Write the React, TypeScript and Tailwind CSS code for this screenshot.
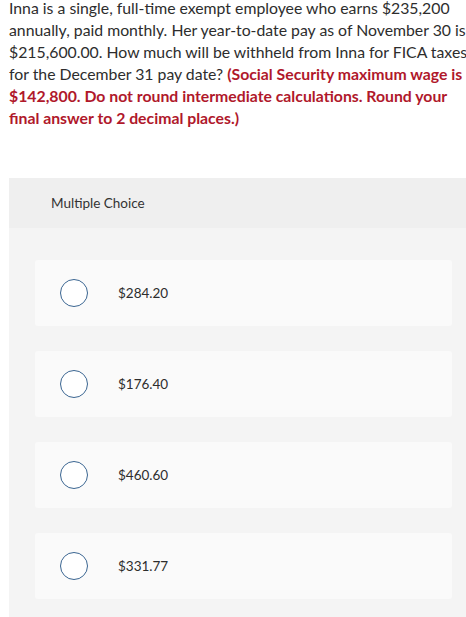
import React from 'react';

const choices = ['$284.20', '$176.40', '$460.60', '$331.77'];

const App: React.FC = () => {
  return (
    <div className="w-[466px] h-[617px] overflow-hidden bg-white" style={{ fontFamily: 'Lato, "Open Sans", sans-serif' }}>
      {/* Question */}
      <div className="pl-[9px] pt-0 w-[560px] text-[15.8px] leading-[22px] text-[#2d2d2d] -mt-[3px]">
        Inna is a single, full-time exempt employee who earns $235,200<br />
        annually, paid monthly. Her year-to-date pay as of November 30 is<br />
        $215,600.00. How much will be withheld from Inna for FICA taxes<br />
        for the December 31 pay date?{' '}
        <span className="font-bold text-[#b0182b]">
          (Social Security maximum wage is<br />
          $142,800. Do not round intermediate calculations. Round your<br />
          final answer to 2 decimal places.)
        </span>
      </div>

      {/* Multiple choice panel */}
      <div className="ml-[9px] mt-[49px] w-[470px] bg-[#f4f4f4]">
        <div className="h-[50px] bg-[#efefef] flex items-center pl-[42px] text-[13.5px] text-[#333]">
          Multiple Choice
        </div>
        <div className="pt-[32px] pl-[26px] pr-[18px] flex flex-col gap-[25px] pb-[20px]">
          {choices.map((c) => (
            <div key={c} className="w-[417px] h-[66px] bg-[#fafafa] rounded-[3px] flex items-center pl-[25px]">
              <div className="w-[28px] h-[28px] rounded-full border-[1.5px] border-[#3a6591] bg-white" />
              <span className="ml-[30px] text-[13.5px] text-[#2d2d2d]">{c}</span>
            </div>
          ))}
        </div>
      </div>
    </div>
  );
};

export default App;
